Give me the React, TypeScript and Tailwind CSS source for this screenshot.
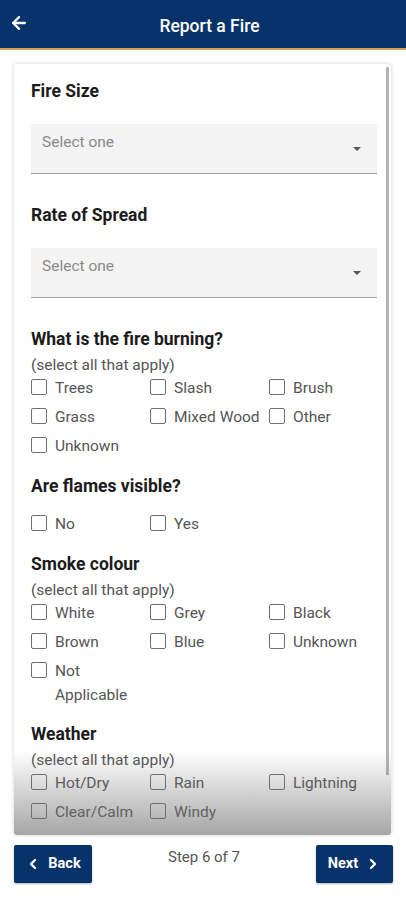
import { ArrowLeft, ChevronLeft, ChevronRight } from 'lucide-react';

const font = { fontFamily: 'Roboto, "Liberation Sans", sans-serif' };

function Heading({ children, className = '' }: { children: string; className?: string }) {
  return <h2 className={`text-[17.5px] leading-[24px] font-bold text-[#1b1b1b] ${className}`}>{children}</h2>;
}

function Hint() {
  return <p className="mt-[3px] text-[15.5px] leading-[22px] text-[#555]">(select all that apply)</p>;
}

function Select() {
  return (
    <div className="relative h-[50px] bg-[#f4f4f4] border-b border-[#9e9e9e] pl-[11px] pt-[6px]">
      <span className="text-[15.5px] leading-[22px] text-[#8a8a8a]">Select one</span>
      <span className="absolute right-[16px] top-[23px] w-0 h-0 border-l-[4px] border-r-[4px] border-t-[4px] border-l-transparent border-r-transparent border-t-[#555]" />
    </div>
  );
}

function Check({ label }: { label: string }) {
  return (
    <label className="flex items-start gap-[8px] text-[15.5px] leading-[24px] text-[#555]">
      <span className="mt-[3px] w-[16px] h-[16px] shrink-0 border-[1.5px] border-[#6f6f6f] rounded-[2px] bg-white" />
      <span>{label}</span>
    </label>
  );
}

function Options({ items }: { items: string[] }) {
  return (
    <div className="grid grid-cols-[119px_119px_1fr] gap-y-[5px]">
      {items.map(i => <Check key={i} label={i} />)}
    </div>
  );
}

export default function App() {
  return (
    <div className="w-[406px] h-[900px] bg-white flex flex-col" style={font}>
      <header className="h-[50px] bg-[#08326a] border-b-2 border-[#d6a04c] flex items-center relative shrink-0">
        <ArrowLeft className="absolute left-[9px] top-[13px] text-white" size={20} strokeWidth={2.75} />
        <h1 className="flex-1 text-center text-white text-[17.5px] font-medium pt-[4px] pl-[13px]">Report a Fire</h1>
      </header>

      <div className="mx-[14px] mt-[14px] mr-[15px] h-[771px] relative overflow-hidden bg-white rounded-[3px] shadow-[0_0_4px_rgba(0,0,0,0.18)]">
        <div className="pl-[17px] pr-[14px] pt-[15px]">
          <Heading>Fire Size</Heading>
          <div className="mt-[21px]"><Select /></div>

          <Heading className="mt-[29px]">Rate of Spread</Heading>
          <div className="mt-[21px]"><Select /></div>

          <Heading className="mt-[29px]">What is the fire burning?</Heading>
          <Hint />
          <Options items={['Trees', 'Slash', 'Brush', 'Grass', 'Mixed Wood', 'Other', 'Unknown']} />

          <Heading className="mt-[16px]">Are flames visible?</Heading>
          <div className="mt-[14px]">
            <Options items={['No', 'Yes']} />
          </div>

          <Heading className="mt-[16px]">Smoke colour</Heading>
          <Hint />
          <Options items={['White', 'Grey', 'Black', 'Brown', 'Blue', 'Unknown', 'Not Applicable']} />

          <Heading className="mt-[15px]">Weather</Heading>
          <Hint />
          <Options items={['Hot/Dry', 'Rain', 'Lightning', 'Clear/Calm', 'Windy']} />
          <div className="h-[40px]" />
        </div>
        <div className="absolute right-[2px] top-[3px] w-[3px] h-[708px] bg-[#b4b4b4]" />
        <div className="absolute left-0 right-0 bottom-0 h-[84px] bg-gradient-to-b from-[rgba(255,255,255,0)] to-[rgba(110,110,110,0.62)]" />
      </div>

      <div className="flex items-start justify-between mx-[14px] mr-[13px] mt-[10px]">
        <button className="w-[78px] h-[38px] bg-[#08326a] rounded-[2px] shadow-[0_1px_2px_rgba(0,0,0,0.3)] flex items-center justify-center gap-[7px] text-white text-[14.5px] font-bold">
          <ChevronLeft size={16} strokeWidth={3.5} />
          <span>Back</span>
        </button>
        <span className="text-[15px] text-[#555] mt-[1px]">Step 6 of 7</span>
        <button className="w-[77px] h-[38px] bg-[#08326a] rounded-[2px] shadow-[0_1px_2px_rgba(0,0,0,0.3)] flex items-center justify-center gap-[7px] text-white text-[14.5px] font-bold">
          <span>Next</span>
          <ChevronRight size={16} strokeWidth={3.5} />
        </button>
      </div>
    </div>
  );
}
